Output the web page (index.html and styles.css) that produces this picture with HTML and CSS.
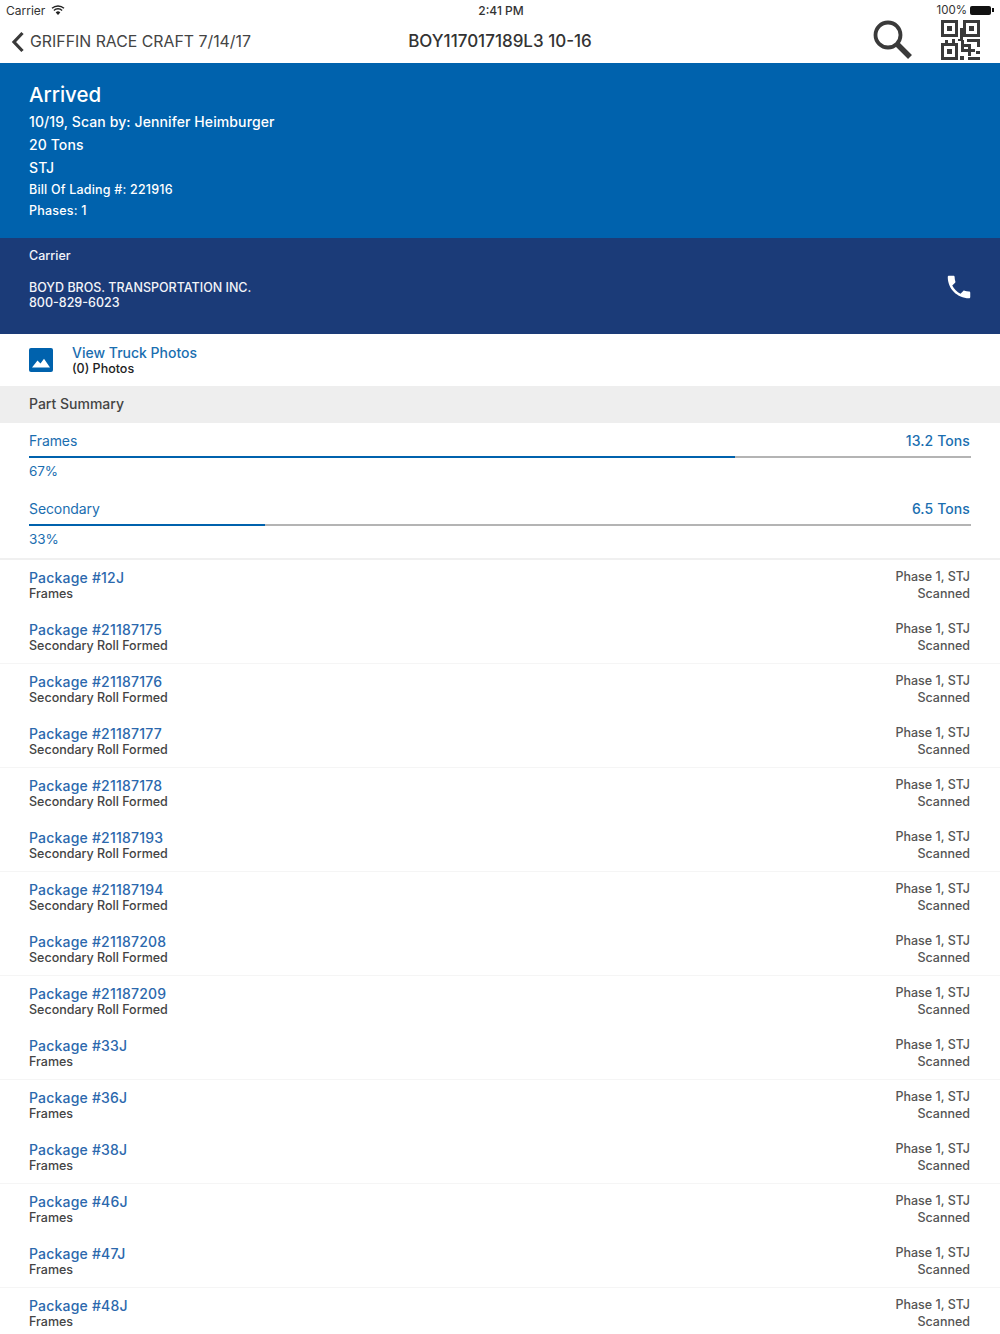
FILE: index.html
```html
<!DOCTYPE html>
<html>
    <head>
        <meta charset="UTF-8" />
        <title>BOY117017189L3 10-16</title>
        <link rel="stylesheet" href="styles.css">
    </head>
    <body>
        <div class="status_bar">
            <div class="status_left">Carrier
                <svg class="wifi" width="14" height="10" viewBox="0 0 14 10"><path d="M7 10 L4.700 7.400 A3.400 3.400 0 0 1 9.300 7.400 Z" fill="#222"/><path d="M2.900 5.400 A6 6 0 0 1 11.100 5.400" fill="none" stroke="#222" stroke-width="1.400"/><path d="M1 3.300 A8.800 8.800 0 0 1 13 3.300" fill="none" stroke="#222" stroke-width="1.400"/></svg>
            </div>
            <div class="status_time">2:41 PM</div>
            <div class="status_right">100%
                <span class="battery"></span><span class="battery_tip"></span>
            </div>
        </div>
        <div class="nav_bar">
            <div class="nav_back">
                <svg width="14" height="22" viewBox="0 0 14 22"><path d="M11.500 2 L3 11 L11.500 20" fill="none" stroke="#3a3a3a" stroke-width="3.200"/></svg>
                <span>GRIFFIN RACE CRAFT 7/14/17</span>
            </div>
            <div class="nav_title">BOY117017189L3 10-16</div>
            <div class="nav_icons">
                <svg width="40" height="40" viewBox="0 0 40 40"><circle cx="15" cy="15" r="12.500" fill="none" stroke="#3a3a3a" stroke-width="3.800"/><path d="M24 24 L37 37" stroke="#3a3a3a" stroke-width="5.500"/></svg>
                <svg width="40" height="40" viewBox="0 0 40 40" fill="#3a3a3a">
                    <path fill-rule="evenodd" d="M1 0H18V17H1Z M4 3V14H15V3Z"/><rect x="7" y="6" width="5" height="5"/>
                    <path fill-rule="evenodd" d="M23 0H40V17H23Z M26 3V14H37V3Z"/><rect x="29" y="6" width="5" height="5"/>
                    <path fill-rule="evenodd" d="M1 23H18V40H1Z M4 26V37H15V26Z"/><rect x="7" y="29" width="5" height="5"/>
                    <rect x="5" y="20" width="3" height="3"/><rect x="12" y="19" width="3" height="4"/>
                    <rect x="20" y="8" width="3" height="13"/><rect x="18" y="19" width="5" height="2"/>
                    <rect x="21" y="20" width="3" height="12"/><rect x="24" y="24" width="5" height="3"/><rect x="27" y="19" width="13" height="3"/>
                    <rect x="37" y="19" width="3" height="8"/><rect x="28" y="24" width="3" height="12"/><rect x="24" y="29" width="11" height="3"/>
                    <rect x="20" y="36" width="4" height="4"/><rect x="28" y="37" width="12" height="3"/><rect x="36" y="31" width="4" height="3"/>
                </svg>
            </div>
        </div>
        <div class="status_panel">
            <div class="panel_title">Arrived</div>
            <div class="panel_line">10/19, Scan by: Jennifer Heimburger</div>
            <div class="panel_line">20 Tons</div>
            <div class="panel_line">STJ</div>
            <div class="panel_line small">Bill Of Lading #: 221916</div>
            <div class="panel_line small">Phases: 1</div>
        </div>
        <div class="carrier_panel">
            <div>
                <div class="carrier_label">Carrier</div>
                <div class="carrier_name">BOYD BROS. TRANSPORTATION INC.</div>
                <div class="carrier_phone">800-829-6023</div>
            </div>
            <svg class="phone" width="30" height="30" viewBox="0 0 24 24"><path fill="#fff" d="M6.600 10.800c1.400 2.800 3.800 5.100 6.600 6.600l2.200-2.200c.3-.3.700-.4 1-.2 1.100.4 2.300.6 3.600.6.600 0 1 .4 1 1V20c0 .6-.4 1-1 1C10.600 21 3 13.400 3 4c0-.6.400-1 1-1h3.500c.6 0 1 .4 1 1 0 1.300.2 2.500.6 3.600.1.300 0 .7-.2 1z"/></svg>
        </div>
        <div class="photos_row">
            <svg width="24" height="24" viewBox="0 0 24 24"><rect width="24" height="24" rx="2" fill="#0062ad"/><path fill="#fff" d="M3 19.500 L8.500 12.500 L11.500 15.500 L15 10.800 L21 19.500Z"/></svg>
            <div>
                <div class="photos_link">View Truck Photos</div>
                <div class="photos_count">(0) Photos</div>
            </div>
        </div>
        <div class="section_head">Part Summary</div>
        <div class="summary">
            <div class="summary_item">
                <div class="summary_top"><span>Frames</span><span class="tons">13.2 Tons</span></div>
                <div class="bar"><div class="bar_fill" style="width: 74.9%"></div></div>
                <div class="percent">67%</div>
            </div>
            <div class="summary_item">
                <div class="summary_top"><span>Secondary</span><span class="tons">6.5 Tons</span></div>
                <div class="bar"><div class="bar_fill" style="width: 25%"></div></div>
                <div class="percent">33%</div>
            </div>
        </div>
        <div class="packages">
            <div class="pkg"><div><div class="pkg_name">Package #12J</div><div class="pkg_type">Frames</div></div><div class="pkg_right">Phase 1, STJ<br />Scanned</div></div>
            <div class="pkg"><div><div class="pkg_name">Package #21187175</div><div class="pkg_type">Secondary Roll Formed</div></div><div class="pkg_right">Phase 1, STJ<br />Scanned</div></div>
            <div class="pkg"><div><div class="pkg_name">Package #21187176</div><div class="pkg_type">Secondary Roll Formed</div></div><div class="pkg_right">Phase 1, STJ<br />Scanned</div></div>
            <div class="pkg"><div><div class="pkg_name">Package #21187177</div><div class="pkg_type">Secondary Roll Formed</div></div><div class="pkg_right">Phase 1, STJ<br />Scanned</div></div>
            <div class="pkg"><div><div class="pkg_name">Package #21187178</div><div class="pkg_type">Secondary Roll Formed</div></div><div class="pkg_right">Phase 1, STJ<br />Scanned</div></div>
            <div class="pkg"><div><div class="pkg_name">Package #21187193</div><div class="pkg_type">Secondary Roll Formed</div></div><div class="pkg_right">Phase 1, STJ<br />Scanned</div></div>
            <div class="pkg"><div><div class="pkg_name">Package #21187194</div><div class="pkg_type">Secondary Roll Formed</div></div><div class="pkg_right">Phase 1, STJ<br />Scanned</div></div>
            <div class="pkg"><div><div class="pkg_name">Package #21187208</div><div class="pkg_type">Secondary Roll Formed</div></div><div class="pkg_right">Phase 1, STJ<br />Scanned</div></div>
            <div class="pkg"><div><div class="pkg_name">Package #21187209</div><div class="pkg_type">Secondary Roll Formed</div></div><div class="pkg_right">Phase 1, STJ<br />Scanned</div></div>
            <div class="pkg"><div><div class="pkg_name">Package #33J</div><div class="pkg_type">Frames</div></div><div class="pkg_right">Phase 1, STJ<br />Scanned</div></div>
            <div class="pkg"><div><div class="pkg_name">Package #36J</div><div class="pkg_type">Frames</div></div><div class="pkg_right">Phase 1, STJ<br />Scanned</div></div>
            <div class="pkg"><div><div class="pkg_name">Package #38J</div><div class="pkg_type">Frames</div></div><div class="pkg_right">Phase 1, STJ<br />Scanned</div></div>
            <div class="pkg"><div><div class="pkg_name">Package #46J</div><div class="pkg_type">Frames</div></div><div class="pkg_right">Phase 1, STJ<br />Scanned</div></div>
            <div class="pkg"><div><div class="pkg_name">Package #47J</div><div class="pkg_type">Frames</div></div><div class="pkg_right">Phase 1, STJ<br />Scanned</div></div>
            <div class="pkg"><div><div class="pkg_name">Package #48J</div><div class="pkg_type">Frames</div></div><div class="pkg_right">Phase 1, STJ<br />Scanned</div></div>
        </div>
    </body>
</html>
```
FILE: styles.css
```css
html, body {
    margin: 0;
    height: 1334px;
    overflow: hidden;
}
body {
    background: #fff;
    font-family: "Inter", "Liberation Sans", sans-serif;
    color: #222;
}
.status_bar {
    height: 20px;
    padding: 0 6px;
    display: grid;
    grid-template-columns: 1fr auto 1fr;
    align-items: center;
    font-size: 12px;
    color: #333;
}
.status_left {
    display: flex;
    align-items: center;
    gap: 6px;
}
.status_time {
    font-weight: 500;
    padding-left: 2px;
}
.status_right {
    display: flex;
    align-items: center;
    justify-content: flex-end;
    gap: 3px;
    font-size: 11.500px;
}
.battery {
    width: 21px;
    height: 9px;
    background: #111;
    border-radius: 2px;
}
.battery_tip {
    width: 2px;
    height: 4px;
    margin-left: -2px;
    background: #111;
}
.nav_bar {
    height: 43px;
    box-sizing: border-box;
    padding-bottom: 2px;
    display: grid;
    grid-template-columns: 1fr auto 1fr;
    align-items: center;
}
.nav_back {
    display: flex;
    align-items: center;
    gap: 5px;
    padding-left: 11px;
    padding-top: 1px;
    font-size: 15.850px;
    color: #444;
    white-space: nowrap;
}
.nav_title {
    font-size: 17px;
    font-weight: 500;
    color: #333;
}
.nav_icons {
    display: flex;
    justify-content: flex-end;
    align-items: center;
    gap: 27px;
    padding-right: 20px;
    margin-left: -1px;
    margin-bottom: 2px;
}
.status_panel {
    height: 175px;
    box-sizing: border-box;
    padding: 19px 29px 0;
    background: #0062ad;
    color: #fff;
}
.panel_title {
    font-size: 20.500px;
    font-weight: 500;
    line-height: 25px;
    margin-bottom: 3px;
}
.panel_line {
    font-size: 14px;
    font-weight: 500;
    line-height: 23px;
    letter-spacing: 0.1px;
}
.panel_line.small {
    font-size: 12.500px;
    line-height: 21px;
    letter-spacing: 0.2px;
}
.carrier_panel {
    height: 96px;
    box-sizing: border-box;
    padding: 10px 28px 0 29px;
    background: #1b3b78;
    color: #f2f4f8;
    display: flex;
    justify-content: space-between;
    align-items: flex-start;
    font-size: 12.500px;
    font-weight: 500;
}
.carrier_label {
    line-height: 15px;
    margin-bottom: 17px;
}
.carrier_name, .carrier_phone {
    line-height: 15px;
}
.phone {
    margin-top: 24px;
    margin-right: -2px;
}
.photos_row {
    height: 52px;
    box-sizing: border-box;
    padding: 0 29px;
    display: flex;
    align-items: center;
    gap: 19px;
}
.photos_link {
    font-size: 14px;
    font-weight: 500;
    line-height: 17px;
    color: #1a6eb0;
}
.photos_count {
    font-size: 12.500px;
    font-weight: 500;
    line-height: 15px;
    color: #222;
}
.section_head {
    height: 37px;
    padding: 0 29px;
    background: #eeeeee;
    font-size: 14px;
    font-weight: 500;
    line-height: 36px;
    color: #444;
}
.summary {
    height: 137px;
    box-sizing: border-box;
    padding-top: 9px;
    border-bottom: 2px solid #f0f0f0;
}
.summary_item {
    height: 67.500px;
    padding: 0 29px;
    color: #1a6eb0;
    font-size: 14px;
    letter-spacing: -0.1px;
}
.summary_top {
    display: flex;
    justify-content: space-between;
    line-height: 17px;
}
.tons {
    font-weight: 500;
    letter-spacing: 0.1px;
    margin-right: 1px;
}
.bar {
    height: 2px;
    margin-top: 7px;
    background: #b4b4b4;
}
.bar_fill {
    height: 2px;
    background: #0062ad;
}
.percent {
    margin-top: 5px;
    line-height: 17px;
    font-size: 13.500px;
}
.pkg {
    height: 52px;
    box-sizing: border-box;
    padding: 9px 30px 0 29px;
    display: flex;
    justify-content: space-between;
}
.pkg:nth-child(even) {
    border-bottom: 1px solid #f5f5f5;
}
.pkg_name {
    font-size: 14px;
    font-weight: 500;
    line-height: 17px;
    letter-spacing: 0.2px;
    color: #2b68ad;
}
.pkg_type {
    font-size: 12.500px;
    font-weight: 500;
    line-height: 16px;
    color: #444;
}
.pkg_right {
    margin-top: -1px;
    font-size: 12.500px;
    font-weight: 500;
    line-height: 17px;
    color: #555;
    text-align: right;
}
```
